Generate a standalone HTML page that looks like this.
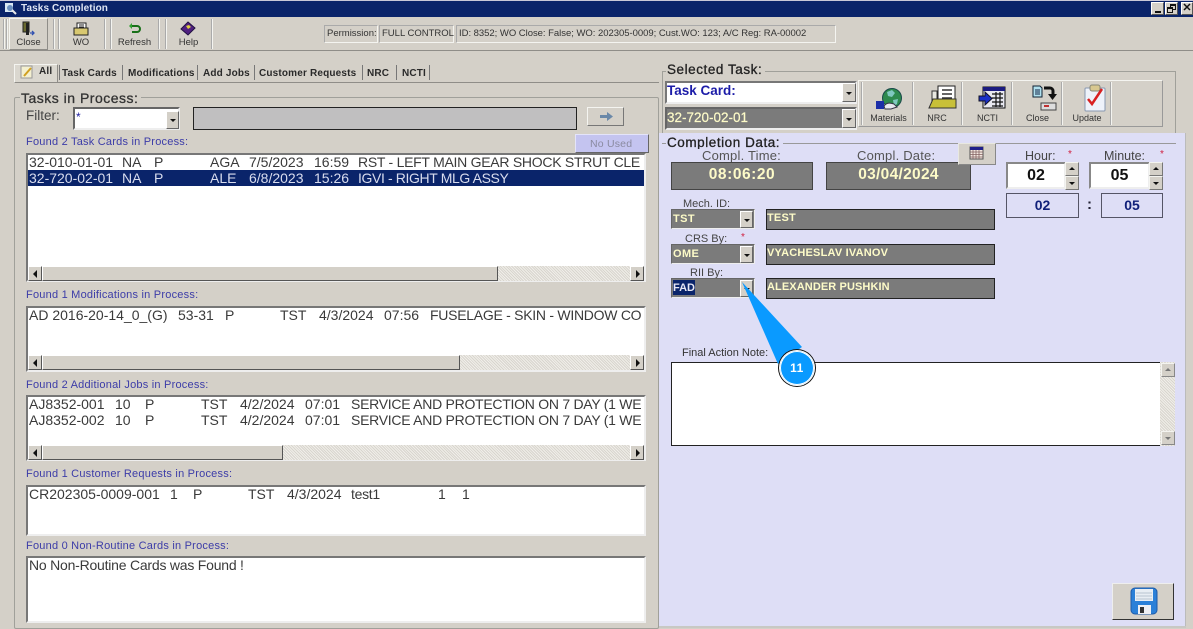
<!DOCTYPE html>
<html><head><meta charset="utf-8"><style>
html,body{margin:0;padding:0}
body{width:1193px;height:629px;overflow:hidden;background:#d4d0c8;position:relative;font-family:"Liberation Sans",sans-serif;color:#222}
div,span.a,svg{position:absolute;box-sizing:border-box}
.t{white-space:pre;line-height:1}
.lb{background:#fff;border:2px solid;border-color:#777 #eee #eee #777}
.row{left:29px;font-size:14px;color:#3a3a3a;white-space:pre;line-height:16px;height:16px}
.d{letter-spacing:-.27px}
.cap{left:26px;font-size:11px;color:#3c3ca8;letter-spacing:.22px;white-space:pre;line-height:1}
.sb{background:#e6e3dc;background-image:repeating-linear-gradient(45deg,#d8d5ce 0 1px,#f0eee9 1px 2px)}
.btn{background:#d4d0c8;border:1px solid;border-color:#fff #555 #555 #fff}
.cmb{background:#d4d0c8;border:1px solid;border-color:#fff #666 #666 #fff}
.dn{width:0;height:0;border-left:3px solid transparent;border-right:3px solid transparent;border-top:3px solid #111}
.dark{background:#7b7b7b;border:1px solid #222;color:#fdfbc8;font-weight:bold}
.sep{width:2px;background:#aaa;border-right:1px solid #f4f4f0}
.tab{font-size:10px;font-weight:bold;color:#2a2a2a;top:69px;white-space:pre;line-height:1;letter-spacing:.17px}
.tl{font-size:9.5px;color:#333;white-space:pre;line-height:1;text-align:center}
.star{color:#d02040;font-size:10px;line-height:1}
</style></head><body>

<!-- title bar -->
<div style="left:0;top:0;width:1193px;height:17px;background:#0a246a;border-top:1px solid #c8c8d8"></div>
<svg style="left:4px;top:2px" width="13" height="13" viewBox="0 0 13 13"><rect x="1" y="1" width="8" height="9" fill="#d8e8f4"/><circle cx="6" cy="6" r="3" fill="#6a90c0"/><path d="M8 8l4 4" stroke="#e8e8e8" stroke-width="2"/></svg>
<div class="t" style="left:21px;top:4px;font-size:10px;font-weight:bold;color:#dfe6f4;letter-spacing:.1px">Tasks Completion</div>
<div class="btn" style="left:1151px;top:2px;width:13px;height:13px"><div style="left:3px;top:8px;width:6px;height:2px;background:#111"></div></div>
<div class="btn" style="left:1165px;top:2px;width:13px;height:13px"><div style="left:4px;top:1px;width:6px;height:6px;border:1px solid #111;border-top-width:2px"></div><div style="left:1px;top:4px;width:6px;height:6px;border:1px solid #111;border-top-width:2px;background:#d4d0c8"></div></div>
<div class="btn" style="left:1181px;top:2px;width:12px;height:13px;font-size:11px;font-weight:bold;line-height:11px;text-align:center;color:#111">✕</div>

<!-- toolbar -->
<div style="left:0;top:50px;width:1193px;height:1px;background:#8f8d88"></div>
<div class="sep" style="left:3px;top:19px;height:30px"></div>
<div class="sep" style="left:6px;top:19px;height:30px"></div>
<div style="left:9px;top:18px;width:39px;height:32px;border:1px solid;border-color:#f4f4f0 #8f8d88 #8f8d88 #f4f4f0"></div>
<div class="sep" style="left:53px;top:19px;height:30px"></div>
<div class="sep" style="left:58px;top:19px;height:30px"></div>
<div class="sep" style="left:104px;top:19px;height:30px"></div>
<div class="sep" style="left:110px;top:19px;height:30px"></div>
<div class="sep" style="left:158px;top:19px;height:30px"></div>
<div class="sep" style="left:165px;top:19px;height:30px"></div>
<div class="sep" style="left:211px;top:19px;height:30px"></div>
<svg style="left:21px;top:21px" width="16" height="16" viewBox="0 0 16 16"><rect x="2" y="1" width="6" height="10" fill="#6a6a30" stroke="#222"/><rect x="5" y="2" width="3" height="12" fill="#222"/><path d="M9 12h4M11 10l2 2-2 2" stroke="#3050b0" fill="none" stroke-width="1.3"/></svg>
<svg style="left:73px;top:22px" width="16" height="14" viewBox="0 0 16 14"><rect x="4" y="1" width="9" height="6" fill="#fff" stroke="#222"/><rect x="1" y="6" width="14" height="7" fill="#d8c870" stroke="#222"/><path d="M6 3h5M6 5h5" stroke="#222"/></svg>
<svg style="left:128px;top:22px" width="14" height="14" viewBox="0 0 14 14"><path d="M3 4h6a3 3 0 0 1 0 6H4" fill="none" stroke="#187018" stroke-width="2"/><path d="M1 4l3-3v6z" fill="#30a030"/></svg>
<svg style="left:180px;top:21px" width="16" height="15" viewBox="0 0 16 15"><path d="M8 1l7 6-7 7-7-6z" fill="#502080" stroke="#201040"/><path d="M6 5l3-1 2 2-3 2z" fill="#e0d040"/></svg>
<div class="tl" style="left:9px;top:38px;width:39px">Close</div>
<div class="tl" style="left:60px;top:38px;width:42px">WO</div>
<div class="tl" style="left:112px;top:38px;width:45px">Refresh</div>
<div class="tl" style="left:167px;top:38px;width:43px">Help</div>

<div style="left:324px;top:25px;width:54px;height:18px;border:1px solid;border-color:#aaa #f4f4f0 #f4f4f0 #aaa"></div>
<div style="left:379px;top:25px;width:75px;height:18px;border:1px solid;border-color:#aaa #f4f4f0 #f4f4f0 #aaa"></div>
<div style="left:456px;top:25px;width:380px;height:18px;border:1px solid;border-color:#aaa #f4f4f0 #f4f4f0 #aaa"></div>
<div class="t" style="left:327px;top:29px;font-size:9.5px;color:#333">Permission:</div>
<div class="t" style="left:382px;top:29px;font-size:9.5px;color:#333">FULL CONTROL</div>
<div class="t" style="left:459px;top:29px;font-size:9.5px;color:#333;letter-spacing:-.03px">ID: 8352; WO Close: False; WO: 202305-0009; Cust.WO: 123; A/C Reg: RA-00002</div>

<!-- tabs -->
<div style="left:14px;top:82px;width:645px;height:1px;background:#8f8d88"></div>
<div style="left:14px;top:64px;width:44px;height:19px;background:#dad7cf;border:1px solid;border-color:#f4f4f0 #8f8d88 #8f8d88 #f4f4f0"></div>
<svg style="left:20px;top:65px" width="15" height="15" viewBox="0 0 15 15"><rect x="1" y="1" width="11" height="12" fill="#f4f0d0" stroke="#999"/><path d="M4 11l7-8" stroke="#d0a020" stroke-width="2"/></svg>
<div class="tab" style="left:39px;top:67px">All</div>
<div class="tab" style="left:62px">Task Cards</div>
<div class="tab" style="left:128px">Modifications</div>
<div class="tab" style="left:203px">Add Jobs</div>
<div class="tab" style="left:259px">Customer Requests</div>
<div class="tab" style="left:367px">NRC</div>
<div class="tab" style="left:402px">NCTI</div>
<div style="left:59px;top:65px;width:1px;height:15px;background:#777"></div>
<div style="left:122px;top:65px;width:1px;height:15px;background:#777"></div>
<div style="left:197px;top:65px;width:1px;height:15px;background:#777"></div>
<div style="left:254px;top:65px;width:1px;height:15px;background:#777"></div>
<div style="left:362px;top:65px;width:1px;height:15px;background:#777"></div>
<div style="left:396px;top:65px;width:1px;height:15px;background:#777"></div>
<div style="left:429px;top:65px;width:1px;height:15px;background:#777"></div>

<!-- tasks group -->
<div style="left:14px;top:97px;width:645px;height:532px;border:1px solid #a0a09a;border-radius:2px"></div>
<div class="t" style="left:20px;top:91px;font-size:14px;color:#333;background:#d4d0c8;padding:0 3px 0 1px;letter-spacing:.5px;-webkit-text-stroke:.3px #333">Tasks in Process:</div>
<div class="t" style="left:26px;top:109px;font-size:13.5px;color:#444">Filter:</div>
<div class="lb" style="left:73px;top:107px;width:107px;height:23px;border-color:#666 #eee #eee #666"></div>
<div class="t" style="left:76px;top:111px;font-size:12px;color:#2020a0">*</div>
<div class="cmb" style="left:166px;top:111px;width:13px;height:18px"><div class="dn" style="left:3px;top:7px"></div></div>
<div style="left:193px;top:107px;width:384px;height:23px;background:#c0bfc0;border:1px solid #222"></div>
<div class="btn" style="left:587px;top:107px;width:37px;height:19px;border-color:#f4f4f0 #777 #777 #f4f4f0"></div>
<svg style="left:599px;top:111px" width="15" height="11" viewBox="0 0 15 11"><path d="M1 4h7V1l6 4.500-6 4.500V7H1z" fill="#6a88a8"/></svg>

<div class="cap" style="top:137px">Found 2 Task Cards in Process:</div>
<div style="left:575px;top:134px;width:74px;height:19px;background:#c4c4f0;border:1px solid;border-color:#e4e4fa #666 #666 #e4e4fa"></div>
<div class="t" style="left:590px;top:139px;font-size:10.5px;color:#8a8aa0;letter-spacing:.2px">No Used</div>

<div class="lb" style="left:26px;top:153px;width:620px;height:129px"></div>
<div style="left:28px;top:170px;width:616px;height:16px;background:#0a246a"></div>
<div class="row" style="top:154px">32-010-01-01</div><div class="row" style="top:154px;left:122px">NA</div><div class="row" style="top:154px;left:154px">P</div><div class="row" style="top:154px;left:210px">AGA</div><div class="row" style="top:154px;left:249px">7/5/2023</div><div class="row" style="top:154px;left:314px">16:59</div><div class="row d" style="top:154px;left:358px;width:286px;overflow:hidden">RST - LEFT MAIN GEAR SHOCK STRUT CLE</div>
<div class="row" style="top:170px;color:#d8dcee">32-720-02-01</div><div class="row" style="top:170px;left:122px;color:#d8dcee">NA</div><div class="row" style="top:170px;left:154px;color:#d8dcee">P</div><div class="row" style="top:170px;left:210px;color:#d8dcee">ALE</div><div class="row" style="top:170px;left:249px;color:#d8dcee">6/8/2023</div><div class="row" style="top:170px;left:314px;color:#d8dcee">15:26</div><div class="row" style="top:170px;left:358px;color:#d8dcee;letter-spacing:-.38px">IGVI - RIGHT MLG ASSY</div>
<div class="sb" style="left:28px;top:266px;width:616px;height:15px"></div>
<div class="btn" style="left:28px;top:266px;width:14px;height:15px"><span class="a" style="left:4px;top:3px;width:0;height:0;border:4px solid transparent;border-right:4px solid #111;border-left:0"></span></div>
<div class="btn" style="left:42px;top:266px;width:456px;height:15px"></div>
<div class="btn" style="left:630px;top:266px;width:14px;height:15px"><span class="a" style="left:5px;top:3px;width:0;height:0;border:4px solid transparent;border-left:4px solid #111;border-right:0"></span></div>

<div class="cap" style="top:290px">Found 1 Modifications in Process:</div>
<div class="lb" style="left:26px;top:306px;width:620px;height:66px"></div>
<div class="row" style="top:307px">AD 2016-20-14_0_(G)</div><div class="row" style="top:307px;left:178px">53-31</div><div class="row" style="top:307px;left:225px">P</div><div class="row" style="top:307px;left:280px">TST</div><div class="row" style="top:307px;left:319px">4/3/2024</div><div class="row" style="top:307px;left:384px">07:56</div><div class="row d" style="top:307px;left:430px;width:214px;overflow:hidden">FUSELAGE - SKIN - WINDOW CO</div>
<div class="sb" style="left:28px;top:355px;width:616px;height:15px"></div>
<div class="btn" style="left:28px;top:355px;width:14px;height:15px"><span class="a" style="left:4px;top:3px;width:0;height:0;border:4px solid transparent;border-right:4px solid #111;border-left:0"></span></div>
<div class="btn" style="left:42px;top:355px;width:418px;height:15px"></div>
<div class="btn" style="left:630px;top:355px;width:14px;height:15px"><span class="a" style="left:5px;top:3px;width:0;height:0;border:4px solid transparent;border-left:4px solid #111;border-right:0"></span></div>

<div class="cap" style="top:380px">Found 2 Additional Jobs in Process:</div>
<div class="lb" style="left:26px;top:395px;width:620px;height:66px"></div>
<div class="row" style="top:396px">AJ8352-001</div><div class="row" style="top:396px;left:115px">10</div><div class="row" style="top:396px;left:145px">P</div><div class="row" style="top:396px;left:201px">TST</div><div class="row" style="top:396px;left:240px">4/2/2024</div><div class="row" style="top:396px;left:305px">07:01</div><div class="row d" style="top:396px;left:351px;width:293px;overflow:hidden">SERVICE AND PROTECTION ON 7 DAY (1 WE</div>
<div class="row" style="top:412px">AJ8352-002</div><div class="row" style="top:412px;left:115px">10</div><div class="row" style="top:412px;left:145px">P</div><div class="row" style="top:412px;left:201px">TST</div><div class="row" style="top:412px;left:240px">4/2/2024</div><div class="row" style="top:412px;left:305px">07:01</div><div class="row d" style="top:412px;left:351px;width:293px;overflow:hidden">SERVICE AND PROTECTION ON 7 DAY (1 WE</div>
<div class="sb" style="left:28px;top:445px;width:616px;height:15px"></div>
<div class="btn" style="left:28px;top:445px;width:14px;height:15px"><span class="a" style="left:4px;top:3px;width:0;height:0;border:4px solid transparent;border-right:4px solid #111;border-left:0"></span></div>
<div class="btn" style="left:42px;top:445px;width:241px;height:15px"></div>
<div class="btn" style="left:630px;top:445px;width:14px;height:15px"><span class="a" style="left:5px;top:3px;width:0;height:0;border:4px solid transparent;border-left:4px solid #111;border-right:0"></span></div>

<div class="cap" style="top:469px">Found 1 Customer Requests in Process:</div>
<div class="lb" style="left:26px;top:485px;width:620px;height:51px"></div>
<div class="row" style="top:486px">CR202305-0009-001</div><div class="row" style="top:486px;left:170px">1</div><div class="row" style="top:486px;left:193px">P</div><div class="row" style="top:486px;left:248px">TST</div><div class="row" style="top:486px;left:287px">4/3/2024</div><div class="row" style="top:486px;left:351px;letter-spacing:-.3px">test1</div><div class="row" style="top:486px;left:438px">1</div><div class="row" style="top:486px;left:462px">1</div>

<div class="cap" style="top:541px">Found 0 Non-Routine Cards in Process:</div>
<div class="lb" style="left:26px;top:556px;width:620px;height:67px"></div>
<div class="row" style="top:557px;letter-spacing:-.22px">No Non-Routine Cards was Found !</div>

<!-- selected task -->
<div style="left:662px;top:71px;width:514px;height:63px;border-top:1px solid #a0a09a;border-left:1px solid #a0a09a;border-right:1px solid #a0a09a"></div>
<div class="t" style="left:666px;top:63px;font-size:13.5px;color:#222;background:#d4d0c8;padding:0 3px 0 1px;letter-spacing:.55px;-webkit-text-stroke:.3px #222">Selected Task:</div>
<div class="lb" style="left:665px;top:81px;width:192px;height:23px;border-color:#777 #eee #eee #777"></div>
<div class="t" style="left:667px;top:84px;font-size:13.5px;font-weight:bold;color:#1c1ca8">Task Card:</div>
<div class="cmb" style="left:842px;top:83px;width:14px;height:19px"><div class="dn" style="left:3px;top:8px"></div></div>
<div style="left:665px;top:107px;width:192px;height:23px;background:#7b7b7b;border:2px solid;border-color:#666 #eee #eee #666"></div>
<div class="t" style="left:667px;top:111px;font-size:13.5px;color:#fdfbc8;-webkit-text-stroke:.2px #fdfbc8">32-720-02-01</div>
<div class="cmb" style="left:842px;top:109px;width:14px;height:19px"><div class="dn" style="left:3px;top:8px"></div></div>

<div style="left:858px;top:80px;width:305px;height:47px;border:1px solid;border-color:#f4f4f0 #999 #999 #f4f4f0"></div>
<div class="sep" style="left:861px;top:82px;height:43px"></div>
<div class="sep" style="left:912px;top:82px;height:43px"></div>
<div class="sep" style="left:961px;top:82px;height:43px"></div>
<div class="sep" style="left:1011px;top:82px;height:43px"></div>
<div class="sep" style="left:1061px;top:82px;height:43px"></div>
<div class="sep" style="left:1110px;top:82px;height:43px"></div>
<svg style="left:873px;top:86px" width="32" height="26" viewBox="0 0 32 26"><circle cx="19" cy="12" r="9.500" fill="#2e8a4e" stroke="#1a4a4a"/><path d="M14 6l5-2 3 3-3 4-4-1zM20 14l5-1-1 5-3 2z" fill="#80c8c0"/><path d="M11 20c3-4 7-3 10-2l3 3-6 2h-6z" fill="#e8e8f0" stroke="#334"/><rect x="3" y="15" width="8" height="8" fill="#1c2ea8"/></svg>
<svg style="left:928px;top:85px" width="29" height="25" viewBox="0 0 29 25"><path d="M4 6h5v16H4z" fill="#e8e8e0" stroke="#333"/><rect x="10" y="1" width="17" height="18" fill="#fff" stroke="#222"/><path d="M14 5h10M14 9h10M14 13h10" stroke="#333" stroke-width="1.500"/><path d="M1 23l4-9h23v9z" fill="#c8c038" stroke="#333"/></svg>
<svg style="left:978px;top:85px" width="28" height="25" viewBox="0 0 28 25"><rect x="5" y="2" width="22" height="21" fill="#e8e8f0" stroke="#111"/><rect x="5" y="2" width="22" height="4" fill="#1c1c80"/><path d="M14 9h11M14 13h11M14 17h11M14 21h11M18 7v15M22 7v15" stroke="#111" stroke-width="1.200"/><path d="M1 11h6V7l7 6.500-7 6.500v-4H1z" fill="#1a30c8" stroke="#112"/></svg>
<svg style="left:1030px;top:85px" width="28" height="26" viewBox="0 0 28 26"><path d="M3 1h7l2 2v9H3z" fill="#b0e0ee" stroke="#123"/><path d="M5 5h5M5 7h5M5 9h5" stroke="#124"/><path d="M14 3h6a3 3 0 0 1 3 3v4" stroke="#111" stroke-width="3" fill="none"/><path d="M18 9h9l-4.500 6z" fill="#111"/><rect x="11" y="18" width="15" height="7" fill="#ddd" stroke="#444"/><rect x="14" y="20" width="5" height="2" fill="#c03030"/></svg>
<svg style="left:1083px;top:84px" width="24" height="28" viewBox="0 0 24 28"><rect x="2" y="4" width="20" height="23" rx="1" fill="#eef2fa" stroke="#8898b0"/><rect x="7" y="1" width="10" height="6" rx="2" fill="#d8c890" stroke="#887"/><path d="M5 15l4 5 10-15" stroke="#d82020" stroke-width="2.500" fill="none"/></svg>
<div class="tl" style="left:864px;top:114px;width:49px;font-size:9px">Materials</div>
<div class="tl" style="left:913px;top:114px;width:48px;font-size:9px">NRC</div>
<div class="tl" style="left:963px;top:114px;width:49px;font-size:9px">NCTI</div>
<div class="tl" style="left:1013px;top:114px;width:49px;font-size:9px">Close</div>
<div class="tl" style="left:1063px;top:114px;width:48px;font-size:9px">Update</div>

<!-- completion panel -->
<div style="left:659px;top:133px;width:527px;height:493px;background:#dedef6"></div>
<div style="left:659px;top:626px;width:527px;height:2px;background:#c8c8c4"></div>
<div style="left:1185px;top:133px;width:1px;height:493px;background:#bbb"></div>
<div style="left:662px;top:143px;width:514px;height:1px;background:#999"></div>
<div class="t" style="left:666px;top:136px;font-size:13.5px;color:#222;background:#dedef6;padding:0 3px 0 1px;letter-spacing:.55px;-webkit-text-stroke:.3px #222;height:13px;overflow:hidden">Completion Data:</div>

<div class="t" style="left:702px;top:149px;font-size:13px;color:#555;letter-spacing:.2px">Compl. Time:</div>
<div class="t" style="left:857px;top:149px;font-size:13px;color:#555;letter-spacing:.2px">Compl. Date:</div>
<div class="dark" style="left:671px;top:162px;width:142px;height:28px;border-color:#444;font-size:15.500px;line-height:24px;text-align:center;letter-spacing:.55px">08:06:20</div>
<div class="dark" style="left:826px;top:162px;width:145px;height:28px;border-color:#444;font-size:15.500px;line-height:24px;text-align:center;letter-spacing:.3px">03/04/2024</div>
<div style="left:958px;top:143px;width:38px;height:22px;background:#d4d0c8;border:1px solid;border-color:#e8e8e0 #888 #888 #e8e8e0"></div>
<svg style="left:969px;top:146px" width="15" height="14" viewBox="0 0 15 14"><rect x="1" y="1" width="13" height="12" fill="#f4e8e0" stroke="#555"/><rect x="1" y="1" width="13" height="3" fill="#20208a"/><path d="M1 6h13M1 8.500h13M1 11h13M4 4v9M7 4v9M10 4v9" stroke="#806060" stroke-width=".8"/></svg>

<div class="t" style="left:1025px;top:150px;font-size:12.500px;color:#444">Hour:</div>
<div class="t" style="left:1104px;top:150px;font-size:12.500px;color:#444">Minute:</div>
<div class="star" style="left:1068px;top:150px">*</div>
<div class="star" style="left:1160px;top:150px">*</div>
<div class="lb" style="left:1006px;top:162px;width:60px;height:27px;border-color:#888 #eee #eee #888;font-size:16px;font-weight:bold;color:#111;text-align:center;line-height:23px">02</div>
<div class="lb" style="left:1089px;top:162px;width:61px;height:27px;border-color:#888 #eee #eee #888;font-size:16px;font-weight:bold;color:#111;text-align:center;line-height:23px">05</div>
<div class="btn" style="left:1065px;top:162px;width:14px;height:14px;border-color:#f4f4f0 #777 #777 #f4f4f0"><span class="a" style="left:3px;top:4px;width:0;height:0;border:3px solid transparent;border-bottom:3px solid #111;border-top:0"></span></div>
<div class="btn" style="left:1065px;top:176px;width:14px;height:14px;border-color:#f4f4f0 #777 #777 #f4f4f0"><span class="a" style="left:3px;top:5px;width:0;height:0;border:3px solid transparent;border-top:3px solid #111;border-bottom:0"></span></div>
<div class="btn" style="left:1149px;top:162px;width:14px;height:14px;border-color:#f4f4f0 #777 #777 #f4f4f0"><span class="a" style="left:3px;top:4px;width:0;height:0;border:3px solid transparent;border-bottom:3px solid #111;border-top:0"></span></div>
<div class="btn" style="left:1149px;top:176px;width:14px;height:14px;border-color:#f4f4f0 #777 #777 #f4f4f0"><span class="a" style="left:3px;top:5px;width:0;height:0;border:3px solid transparent;border-top:3px solid #111;border-bottom:0"></span></div>
<div style="left:1006px;top:193px;width:73px;height:25px;border:1px solid #556;font-size:14px;font-weight:bold;color:#10207a;text-align:center;line-height:22px">02</div>
<div style="left:1101px;top:193px;width:62px;height:25px;border:1px solid #556;font-size:14px;font-weight:bold;color:#10207a;text-align:center;line-height:22px">05</div>
<div class="t" style="left:1087px;top:197px;font-size:15px;font-weight:bold;color:#223">:</div>

<div class="t" style="left:683px;top:199px;font-size:11px;color:#444">Mech. ID:</div>
<div class="t" style="left:685px;top:234px;font-size:11px;color:#444">CRS By:</div>
<div class="star" style="left:741px;top:233px">*</div>
<div class="t" style="left:690px;top:268px;font-size:11px;color:#444">RII By:</div>

<div style="left:671px;top:209px;width:84px;height:20px;background:#7b7b7b;border:1px solid;border-color:#666 #eee #eee #666"></div>
<div style="left:671px;top:244px;width:84px;height:20px;background:#7b7b7b;border:1px solid;border-color:#666 #eee #eee #666"></div>
<div style="left:671px;top:278px;width:84px;height:20px;background:#7b7b7b;border:1px solid;border-color:#666 #eee #eee #666"></div>
<div class="t" style="left:673px;top:214px;font-size:11px;font-weight:bold;color:#fdfbc8;letter-spacing:.4px">TST</div>
<div class="t" style="left:673px;top:249px;font-size:11px;font-weight:bold;color:#fdfbc8;letter-spacing:.4px">OME</div>
<div style="left:673px;top:280px;width:22px;height:15px;background:#0a246a"></div>
<div class="t" style="left:673px;top:283px;font-size:11px;font-weight:bold;color:#e8e8f4">FAD</div>
<div class="cmb" style="left:740px;top:211px;width:13px;height:17px"><div class="dn" style="left:3px;top:7px"></div></div>
<div class="cmb" style="left:740px;top:246px;width:13px;height:17px"><div class="dn" style="left:3px;top:7px"></div></div>
<div class="cmb" style="left:740px;top:280px;width:13px;height:17px"><div class="dn" style="left:3px;top:7px"></div></div>

<div class="dark" style="left:766px;top:209px;width:229px;height:21px;font-size:11px;line-height:16px;letter-spacing:.2px">TEST</div>
<div class="dark" style="left:766px;top:244px;width:229px;height:21px;font-size:11px;line-height:16px;letter-spacing:.2px">VYACHESLAV IVANOV</div>
<div class="dark" style="left:766px;top:278px;width:229px;height:21px;font-size:11px;line-height:17px;letter-spacing:.1px">ALEXANDER PUSHKIN</div>

<div class="t" style="left:682px;top:348px;font-size:11px;color:#333">Final Action Note:</div>
<div style="left:671px;top:362px;width:504px;height:84px;background:#fff;border:1px solid #222;border-right:0"></div>
<div class="sb" style="left:1160px;top:362px;width:15px;height:84px"></div>
<div class="btn" style="left:1161px;top:363px;width:14px;height:14px;border-color:#f4f4f0 #888 #888 #f4f4f0"><span class="a" style="left:3px;top:4px;width:0;height:0;border:3px solid transparent;border-bottom:3px solid #777;border-top:0"></span></div>
<div class="btn" style="left:1161px;top:431px;width:14px;height:14px;border-color:#f4f4f0 #888 #888 #f4f4f0"><span class="a" style="left:3px;top:5px;width:0;height:0;border:3px solid transparent;border-top:3px solid #777;border-bottom:0"></span></div>

<!-- save button -->
<div style="left:1112px;top:583px;width:62px;height:37px;background:#d4d0c8;border:1px solid;border-color:#eee #333 #333 #eee"></div>
<svg style="left:1130px;top:587px" width="28" height="28" viewBox="0 0 28 28"><rect x="1" y="1" width="26" height="26" rx="4" fill="#2a80d8" stroke="#1e5aa8"/><rect x="5" y="2" width="18" height="12" fill="#e8eef4"/><path d="M6 6h16M6 9h16M6 12h16" stroke="#b8c4d0"/><rect x="8" y="18" width="13" height="9" fill="#eef0f4"/><rect x="10" y="20" width="4" height="6" fill="#333"/></svg>

<!-- callout -->
<svg style="left:740px;top:278px" width="84" height="112" viewBox="0 0 84 112"><path d="M2 4L38 86 62 69Z" fill="#0a9aff"/></svg>
<div style="left:779px;top:350px;width:36px;height:36px;border-radius:50%;background:#0a9aff;border:1px solid #fff;box-shadow:0 0 0 1px #111,inset 0 0 0 1px #fff;color:#fff;font-size:12px;font-weight:bold;text-align:center;line-height:35px;letter-spacing:.5px">11</div>
</body></html>
